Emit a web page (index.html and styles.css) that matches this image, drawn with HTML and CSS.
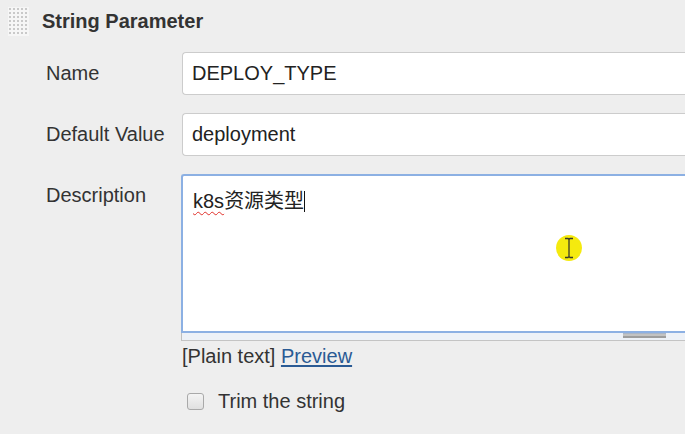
FILE: index.html
```html
<!DOCTYPE html>
<html>
<head>
<meta charset="utf-8">
<link rel="stylesheet" href="styles.css">
</head>
<body>
<div class="panel">
  <div class="header">
    <div class="grip"></div>
    <div class="title">String Parameter</div>
  </div>
  <div class="form">
    <div class="label">Name</div>
    <div class="field"><div class="input">DEPLOY_TYPE</div></div>
    <div class="label">Default Value</div>
    <div class="field"><div class="input">deployment</div></div>
    <div class="label label-top">Description</div>
    <div class="field">
      <div class="textarea"><span class="typo">k8s</span>资源类型<span class="caret"></span></div>
      <div class="resizer"><div class="resizer-grip"></div></div>
      <div class="hint">[Plain text] <a class="link" href="#">Preview</a></div>
    </div>
    <div class="check-row">
      <span class="checkbox"></span>
      <span class="check-label">Trim the string</span>
    </div>
  </div>
  <div class="cursor-spot">
    <svg class="ibeam" width="12" height="22" viewBox="0 0 12 22">
      <path d="M2 1.5h3l1 1 1-1h3M6 2.5v17M2 20.5h3l1-1 1 1h3" fill="none" stroke="#3a3a2a" stroke-width="1.3"/>
    </svg>
  </div>
</div>
</body>
</html>
```
FILE: styles.css
```css
html, body {
  margin: 0;
  padding: 0;
  background: #eeeeee;
}
body {
  font-family: "Liberation Sans", Arial, "Noto Sans CJK SC", sans-serif;
  font-size: 20px;
  color: #333333;
  width: 685px;
  height: 434px;
  overflow: hidden;
}
.panel {
  position: relative;
  height: 434px;
}
.header {
  display: flex;
  align-items: center;
  height: 42px;
  padding-left: 8px;
}
.grip {
  width: 21px;
  height: 29px;
  background-image: radial-gradient(circle, #c9c9c9 1px, transparent 1.3px);
  background-size: 4px 4px;
  background-color: #f6f6f6;
}
.title {
  margin-left: 13px;
  font-weight: bold;
  color: #333;
  line-height: 24px;
}
.form {
  display: grid;
  grid-template-columns: 136px 1fr;
  padding-left: 46px;
  padding-top: 10px;
  row-gap: 18px;
}
.label {
  display: flex;
  align-items: center;
  height: 43px;
  color: #333;
}
.label-top {
  align-self: start;
}
.field {
  min-width: 0;
}
.input {
  height: 43px;
  box-sizing: border-box;
  background: #ffffff;
  border: 1px solid #cccccc;
  border-right: none;
  border-radius: 4px 0 0 4px;
  padding-left: 9px;
  display: flex;
  align-items: center;
  color: #222;
}
.textarea {
  height: 159px;
  margin-left: -1px;
  background: #ffffff;
  border: 2px solid #8cb0e3;
  border-right: none;
  border-radius: 3px 0 0 0;
  padding-left: 10px;
  padding-top: 11px;
  box-sizing: border-box;
  color: #222;
  line-height: 28px;
}
.typo {
  text-decoration: underline wavy #e0302a;
  text-decoration-thickness: 1px;
  text-underline-offset: 3px;
}
.caret {
  display: inline-block;
  width: 1px;
  height: 21px;
  background: #111;
  vertical-align: -4px;
}
.resizer {
  position: relative;
  height: 7px;
  margin-left: -1px;
  background: #edf1f7;
  border-left: 1px solid #bfbfbf;
  border-bottom: 1px solid #c4c4c4;
}
.resizer-grip {
  position: absolute;
  left: 441px;
  top: 0;
  width: 43px;
  height: 5px;
  background: linear-gradient(#aab5c6 0 1px, #c2c2c2 1px 3px, #9d9d9d 3px 5px);
}
.hint {
  margin-top: 4px;
  line-height: 22px;
  color: #333;
}
.link {
  color: #2a5a94;
  text-decoration: underline;
  text-underline-offset: 2px;
}
.check-row {
  display: flex;
  align-items: center;
  margin-top: 5px;
  margin-left: 141px;
  grid-column: 1 / span 2;
}
.checkbox {
  width: 15px;
  height: 15px;
  border: 1px solid #a9a9a9;
  border-radius: 3px;
  background: linear-gradient(#f4f4f4, #e0e0e0);
}
.check-label {
  margin-left: 14px;
  color: #333;
}
.cursor-spot {
  position: absolute;
  left: 556px;
  top: 235px;
  width: 26px;
  height: 26px;
  border-radius: 50%;
  background: #f5ea0e;
  display: flex;
  align-items: center;
  justify-content: center;
}
.ibeam {
  display: block;
}
```
